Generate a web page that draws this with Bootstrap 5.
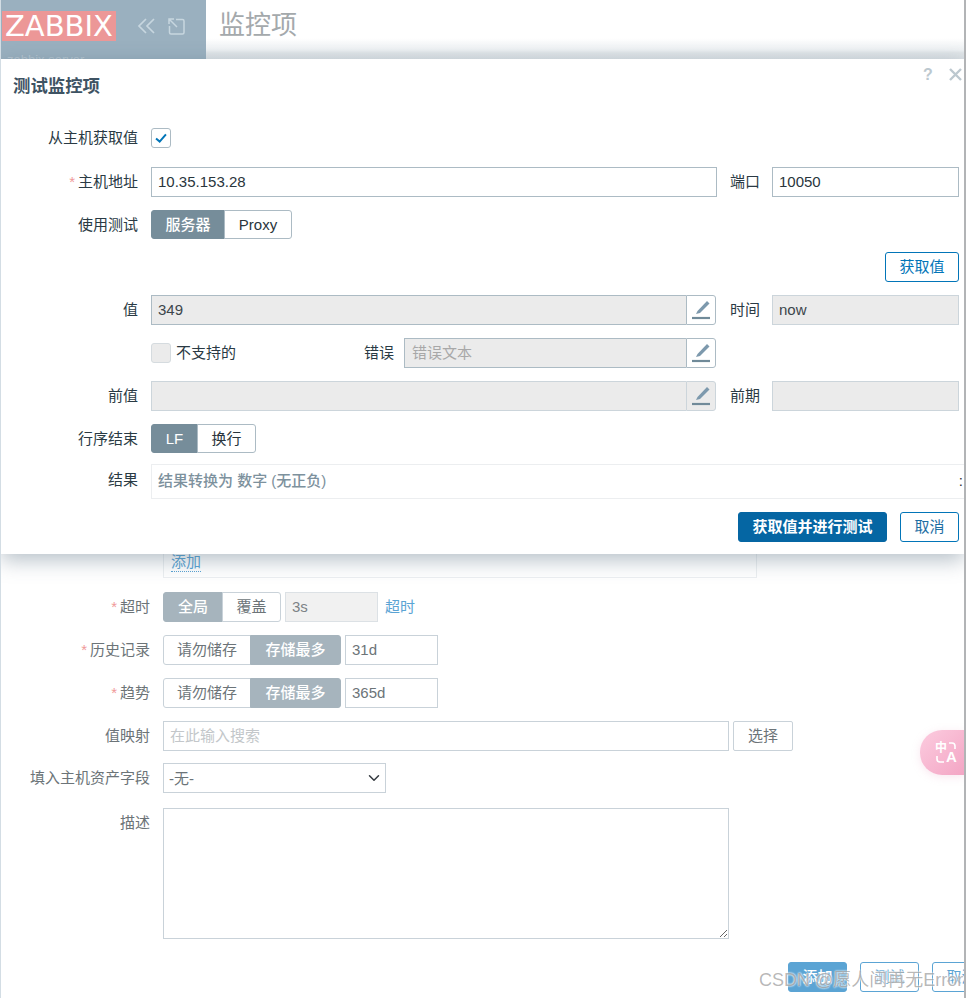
<!DOCTYPE html>
<html lang="zh-CN">
<head>
<meta charset="utf-8">
<title>监控项</title>
<link href="https://cdn.jsdelivr.net/npm/bootstrap@5.3.0/dist/css/bootstrap.min.css" rel="stylesheet">
<style>
html,body{margin:0;height:998px;overflow:hidden;background:#fff}
body{font-family:"Liberation Sans","Noto Sans CJK SC",sans-serif;font-size:15px;line-height:20px}
.shell{width:968px;height:998px}
.pane{width:964px;height:998px;position:relative;overflow:hidden;border-left:1px solid #d3dde4;flex:none}
.sbar{width:4px;height:998px;border-left:2px solid #b2b4b6;background:#fff;flex:none}
.topbar{height:59px}
.brand{width:205px;background:#9ab0bf;position:relative;padding:11px 0 0 1px;overflow:hidden}
.logo{background:#ec9797;color:#fff;font-family:"DejaVu Sans",sans-serif;font-size:29px;line-height:30px;width:114px;height:30px;padding-left:3px;white-space:nowrap}
.brand-icons{margin:7px 0 0 21px;gap:13px}
.srv{position:absolute;left:6px;top:50px;font-size:13px;color:#b5c5d0}
.headline{flex:1;background:linear-gradient(#fff 0,#fff 38px,#eef1f3 50px,#e0e5e8 53px,#dde2e6 59px);padding-left:13px;font-size:26px;line-height:50px;color:#a4a9ac}
/* background form */
.addbox{margin:461px 0 14px 162px;width:594px;height:58px;border:1px solid #eceff1;border-top:0;padding:32px 0 0 7px}
.addlink{color:#5ba4d4;border-bottom:1px dotted #5ba4d4;display:inline-block;line-height:18px}
.frow{margin-bottom:13px}
.frow-tight{margin-bottom:12px}
.flabel{width:149px;margin-right:13px;text-align:right;color:#6c7478;line-height:29px;flex:none}
.req{color:#f09a9a;margin-right:3px}
.pale .form-control,.pale .form-select{height:30px;border-radius:0;border:1px solid #c9d2d9;padding:0 6px 2px;font-size:15px;color:#6c7478;background-color:#fff;box-shadow:none}
.pale .form-control::placeholder{color:#c3c7ca}
.pale .form-control:disabled{background:#f1f1f1;border-color:#dce1e5;color:#7c8286}
.w93{width:93px;margin-left:4px}
.seg .btn{height:30px;padding:0;font-size:15px;line-height:28px;border-radius:3px;flex:none}
.seg-pale .btn{background:#fff;border:1px solid #c9d2d9;color:#6c7478}
.seg-pale .btn.on{background:#a6b4bd;border-color:#a6b4bd;color:#fff;font-weight:500}
.w60{width:60px}.w58{width:59px}.w88{width:88px}.w90{width:91px}
.tlink{color:#5ba4d4;margin-left:7px;line-height:29px}
.btn-choose{width:60px;height:30px;margin-left:4px;padding:0;border:1px solid #c9d2d9;border-radius:2px;color:#6c7478;font-size:15px;background:#fff;line-height:28px}
.pale .form-select.selbox{width:223px;margin-bottom:15px;padding:2px 20px 0 5px;background-position:right 4px center;background-size:14px 12px}
.mapin{width:566px;flex:none}
.pale .form-control.desc{width:566px;height:131px}
.foot{margin:23px 0 0 787px;gap:13px;width:300px}
.foot .btn{width:59px;height:30px;padding:0;font-size:15px;line-height:28px;border-radius:3px;flex:none}
.btn-sky{background:#5ba4d4;border:1px solid #5ba4d4;color:#fff;font-weight:500}
.btn-skyline{background:#fff;border:1px solid #5ba4d4;color:#5ba4d4}
.wmark{position:absolute;left:758px;top:969px;font-size:18px;line-height:22px;color:rgba(95,95,95,.45);white-space:nowrap;text-shadow:0 0 2px #fff,0 0 2px rgba(255,255,255,.8);pointer-events:none}
.bubble{position:absolute;left:919px;top:730px;width:45px;height:45px;border-radius:22px 0 0 22px;background:linear-gradient(135deg,#fcccdf,#f3a5c4);box-shadow:0 2px 8px rgba(230,160,190,.25)}
/* dialog */
.dlg{position:absolute;left:0;right:0;top:59px;height:495px;background:#fff;box-shadow:0 6px 20px rgba(70,95,115,.4);overflow:hidden}
.dlg-title{font-size:17.4px;font-weight:700;color:#3e5363;line-height:22px;padding:16px 0 0 12px;height:69px}
.dlg-help{position:absolute;left:922px;top:6px;color:#bcc8cf;font-weight:700;font-size:16px}
.dlg-x{position:absolute;left:948px;top:9px}
.mrow{margin-bottom:13px}
.mrow-first{margin-bottom:19px;height:20px}
.mrow-low{margin-bottom:11px}
.mrow-mid{height:30px}
.mlabel{width:137px;margin-right:13px;text-align:right;color:#2a3a44;line-height:29px;flex:none}
.mlabel.res{line-height:31px}
.mrow-first .mlabel{line-height:20px}
.dlg .form-control{height:30px;border-radius:0;border:1px solid #acbbc4;padding:0 6px 2px;font-size:15px;color:#29353c;background:#fff;box-shadow:none}
.dlg .form-control:disabled{background:#ebebeb;color:#3c464c}
.fmain{width:566px;flex:none}
.fside{width:187px;flex:none}
.slabel{width:55px;padding-left:13px;color:#2a3a44;line-height:29px;flex:none}
.slabel.wide{width:56px;padding-left:14px}
.pad-right{padding-right:5px}
.seg-dark .btn{background:#fff;border:1px solid #acbbc4;color:#29353c;height:29px;line-height:27px}
.seg-dark .btn.on{background:#768d9a;border-color:#768d9a;color:#fff;font-weight:500}
.w74{width:74px}.w67{width:68px}.w47{width:47px}.w58b{width:59px}
.btn-edge{width:74px;height:30px;padding:0;border:1px solid #0275b8;border-radius:3px;color:#0275b8;background:#fff;font-size:15px;line-height:28px}
.pgroup{width:565px;flex:none}
.pgroup.short{width:312px}
.pgroup .form-control{flex:1;border-right:0!important;min-width:0}
.pencil{width:30px;height:30px;padding:0;border:1px solid #acbbc4;border-radius:0 3px 3px 0;background:#fff;display:flex;align-items:center;justify-content:center;flex:none}
.pencil.off{background:#ebebeb;border-color:#ccd5db}
.dlg .form-control.lite{border-color:#ccd5db}
.dlg .form-check-input{width:20px;height:20px;margin:0;border-radius:3px;border:1px solid #acbbc4;background-color:#fff;box-shadow:none;flex:none;opacity:1}
.dlg .form-check-input:checked{background-color:#fff;background-image:url("data:image/svg+xml,%3Csvg xmlns='http://www.w3.org/2000/svg' viewBox='0 0 20 20'%3E%3Cpath d='M4.500 10.500l4 3.500 7-8' fill='none' stroke='%230275b8' stroke-width='2.200'/%3E%3C/svg%3E");border-color:#acbbc4}
.dlg .form-check-input:disabled{background-color:#ebebeb;border-color:#d5dbdf}
.nosup{margin-left:5px;width:158px;color:#2a3a44}
.errlab{width:60px;text-align:right;margin-right:10px;color:#2a3a44;flex:none}
.dlg .form-control.errin{background:#ebebeb;padding-left:7px}
.dlg .form-control.errin::placeholder{color:#a8a8a8}
.resultbox{width:830px;height:35px;border:1px solid #eceef0;padding:0 0 0 6px;line-height:31px;color:#7d919d;font-weight:500;white-space:nowrap;flex:none;margin-right:-20px;justify-content:space-between}
.colon{color:#333;margin-right:17px}
.actions{padding-right:5px;gap:13px}
.btn-run{width:149px;height:30px;padding:0;border:1px solid #0566a3;background:#0566a3;color:#fff;font-weight:700;border-radius:3px;font-size:15px;line-height:28px}
.btn-cancel{width:59px;height:30px;padding:0;border:1px solid #0275b8;background:#fff;color:#1d6ea3;border-radius:3px;font-size:15px;line-height:28px}
</style>
</head>
<body>
<div class="shell d-flex">
  <div class="pane">
    <div class="topbar d-flex">
      <div class="brand">
        <div class="d-flex">
          <div class="logo">ZABBIX</div>
          <div class="brand-icons d-flex">
            <svg width="18" height="16" viewBox="0 0 18 16" fill="none" stroke="#c7d6df" stroke-width="1.700"><path d="M9 1L2 8l7 7M17 1l-7 7 7 7"/></svg>
            <svg width="17" height="17" viewBox="0 0 17 17" fill="none" stroke="#c7d6df" stroke-width="1.500"><path d="M8 1.500h6.500a1.500 1.500 0 0 1 1.500 1.500v11.500a1.500 1.500 0 0 1-1.500 1.500H3a1.500 1.500 0 0 1-1.500-1.500V8M1 1l8 8M1 6V1h5"/></svg>
          </div>
        </div>
        <div class="srv">zabbix server</div>
      </div>
      <div class="headline">监控项</div>
    </div>

    <div class="pale">
      <div class="addbox"><span class="addlink">添加</span></div>

      <div class="frow d-flex">
        <div class="flabel"><span class="req">*</span>超时</div>
        <div class="seg seg-pale btn-group"><button class="btn on w60">全局</button><button class="btn w58">覆盖</button></div>
        <input class="form-control w93" value="3s" disabled>
        <span class="tlink">超时</span>
      </div>
      <div class="frow d-flex">
        <div class="flabel"><span class="req">*</span>历史记录</div>
        <div class="seg seg-pale btn-group"><button class="btn w88">请勿储存</button><button class="btn on w90">存储最多</button></div>
        <input class="form-control w93" value="31d">
      </div>
      <div class="frow d-flex">
        <div class="flabel"><span class="req">*</span>趋势</div>
        <div class="seg seg-pale btn-group"><button class="btn w88">请勿储存</button><button class="btn on w90">存储最多</button></div>
        <input class="form-control w93" value="365d">
      </div>
      <div class="frow-tight d-flex">
        <div class="flabel">值映射</div>
        <input class="form-control mapin" placeholder="在此输入搜索">
        <button class="btn-choose">选择</button>
      </div>
      <div class="d-flex">
        <div class="flabel">填入主机资产字段</div>
        <select class="form-select selbox"><option>-无-</option></select>
      </div>
      <div class="d-flex">
        <div class="flabel">描述</div>
        <textarea class="form-control desc"></textarea>
      </div>
      <div class="foot d-flex">
        <button class="btn btn-sky">添加</button>
        <button class="btn btn-skyline">测试</button>
        <button class="btn btn-skyline">取消</button>
      </div>
    </div>

    <div class="bubble">
      <svg width="45" height="45" viewBox="0 0 45 45">
        <text x="15" y="22" font-size="12" font-weight="700" fill="#fff" font-family="Noto Sans CJK SC">中</text>
        <text x="26" y="32" font-size="15" font-weight="700" fill="#fff" font-family="Liberation Sans">A</text>
        <path d="M29 13h3a3 3 0 0 1 3 3v3M17 26v3a3 3 0 0 0 3 3h4" fill="none" stroke="#fff" stroke-width="1.600"/>
      </svg>
    </div>
    <div class="wmark">CSDN @愿人间再无Error</div>

    <div class="dlg">
      <div class="dlg-help">?</div>
      <svg class="dlg-x" width="13" height="13" viewBox="0 0 13 13" stroke="#bcc8cf" stroke-width="2.400"><path d="M1 1l11 11M12 1L1 12"/></svg>
      <div class="dlg-title">测试监控项</div>

      <div class="mrow-first d-flex">
        <div class="mlabel">从主机获取值</div>
        <input class="form-check-input" type="checkbox" checked>
      </div>
      <div class="mrow d-flex">
        <div class="mlabel"><span class="req">*</span>主机地址</div>
        <input class="form-control fmain" value="10.35.153.28">
        <div class="slabel">端口</div>
        <input class="form-control fside" value="10050">
      </div>
      <div class="mrow d-flex">
        <div class="mlabel">使用测试</div>
        <div class="seg seg-dark btn-group"><button class="btn on w74">服务器</button><button class="btn w67">Proxy</button></div>
      </div>
      <div class="mrow d-flex justify-content-end pad-right">
        <button class="btn-edge">获取值</button>
      </div>
      <div class="mrow d-flex">
        <div class="mlabel">值</div>
        <div class="pgroup d-flex">
          <input class="form-control" value="349" disabled>
          <button class="pencil"><svg width="22" height="22" viewBox="0 0 22 22" fill="none"><path d="M6 15l1.500-3L17 2l2.500 2.500-9.500 9.500z" fill="#7d99ad"/><path d="M2 19h18" stroke="#708a99" stroke-width="2.200"/></svg></button>
        </div>
        <div class="slabel wide">时间</div>
        <input class="form-control fside lite" value="now" disabled>
      </div>
      <div class="mrow mrow-mid d-flex align-items-center">
        <div class="mlabel"></div>
        <input class="form-check-input" type="checkbox" disabled>
        <span class="nosup">不支持的</span>
        <span class="errlab">错误</span>
        <div class="pgroup short d-flex">
          <input class="form-control errin" placeholder="错误文本" disabled>
          <button class="pencil"><svg width="22" height="22" viewBox="0 0 22 22" fill="none"><path d="M6 15l1.500-3L17 2l2.500 2.500-9.500 9.500z" fill="#7d99ad"/><path d="M2 19h18" stroke="#708a99" stroke-width="2.200"/></svg></button>
        </div>
      </div>
      <div class="mrow d-flex">
        <div class="mlabel">前值</div>
        <div class="pgroup d-flex">
          <input class="form-control lite" disabled>
          <button class="pencil off"><svg width="22" height="22" viewBox="0 0 22 22" fill="none"><path d="M6 15l1.500-3L17 2l2.500 2.500-9.500 9.500z" fill="#7d99ad"/><path d="M2 19h18" stroke="#708a99" stroke-width="2.200"/></svg></button>
        </div>
        <div class="slabel wide">前期</div>
        <input class="form-control fside lite" disabled>
      </div>
      <div class="mrow-low d-flex">
        <div class="mlabel">行序结束</div>
        <div class="seg seg-dark btn-group"><button class="btn on w47">LF</button><button class="btn w58b">换行</button></div>
      </div>
      <div class="mrow d-flex">
        <div class="mlabel res">结果</div>
        <div class="resultbox d-flex"><span>结果转换为 数字 (无正负)</span><span class="colon">:</span></div>
      </div>
      <div class="actions d-flex justify-content-end">
        <button class="btn-run">获取值并进行测试</button>
        <button class="btn-cancel">取消</button>
      </div>
    </div>
  </div>
  <div class="sbar"></div>
</div>
<script src="https://cdn.jsdelivr.net/npm/bootstrap@5.3.0/dist/js/bootstrap.bundle.min.js"></script>
</body>
</html>
